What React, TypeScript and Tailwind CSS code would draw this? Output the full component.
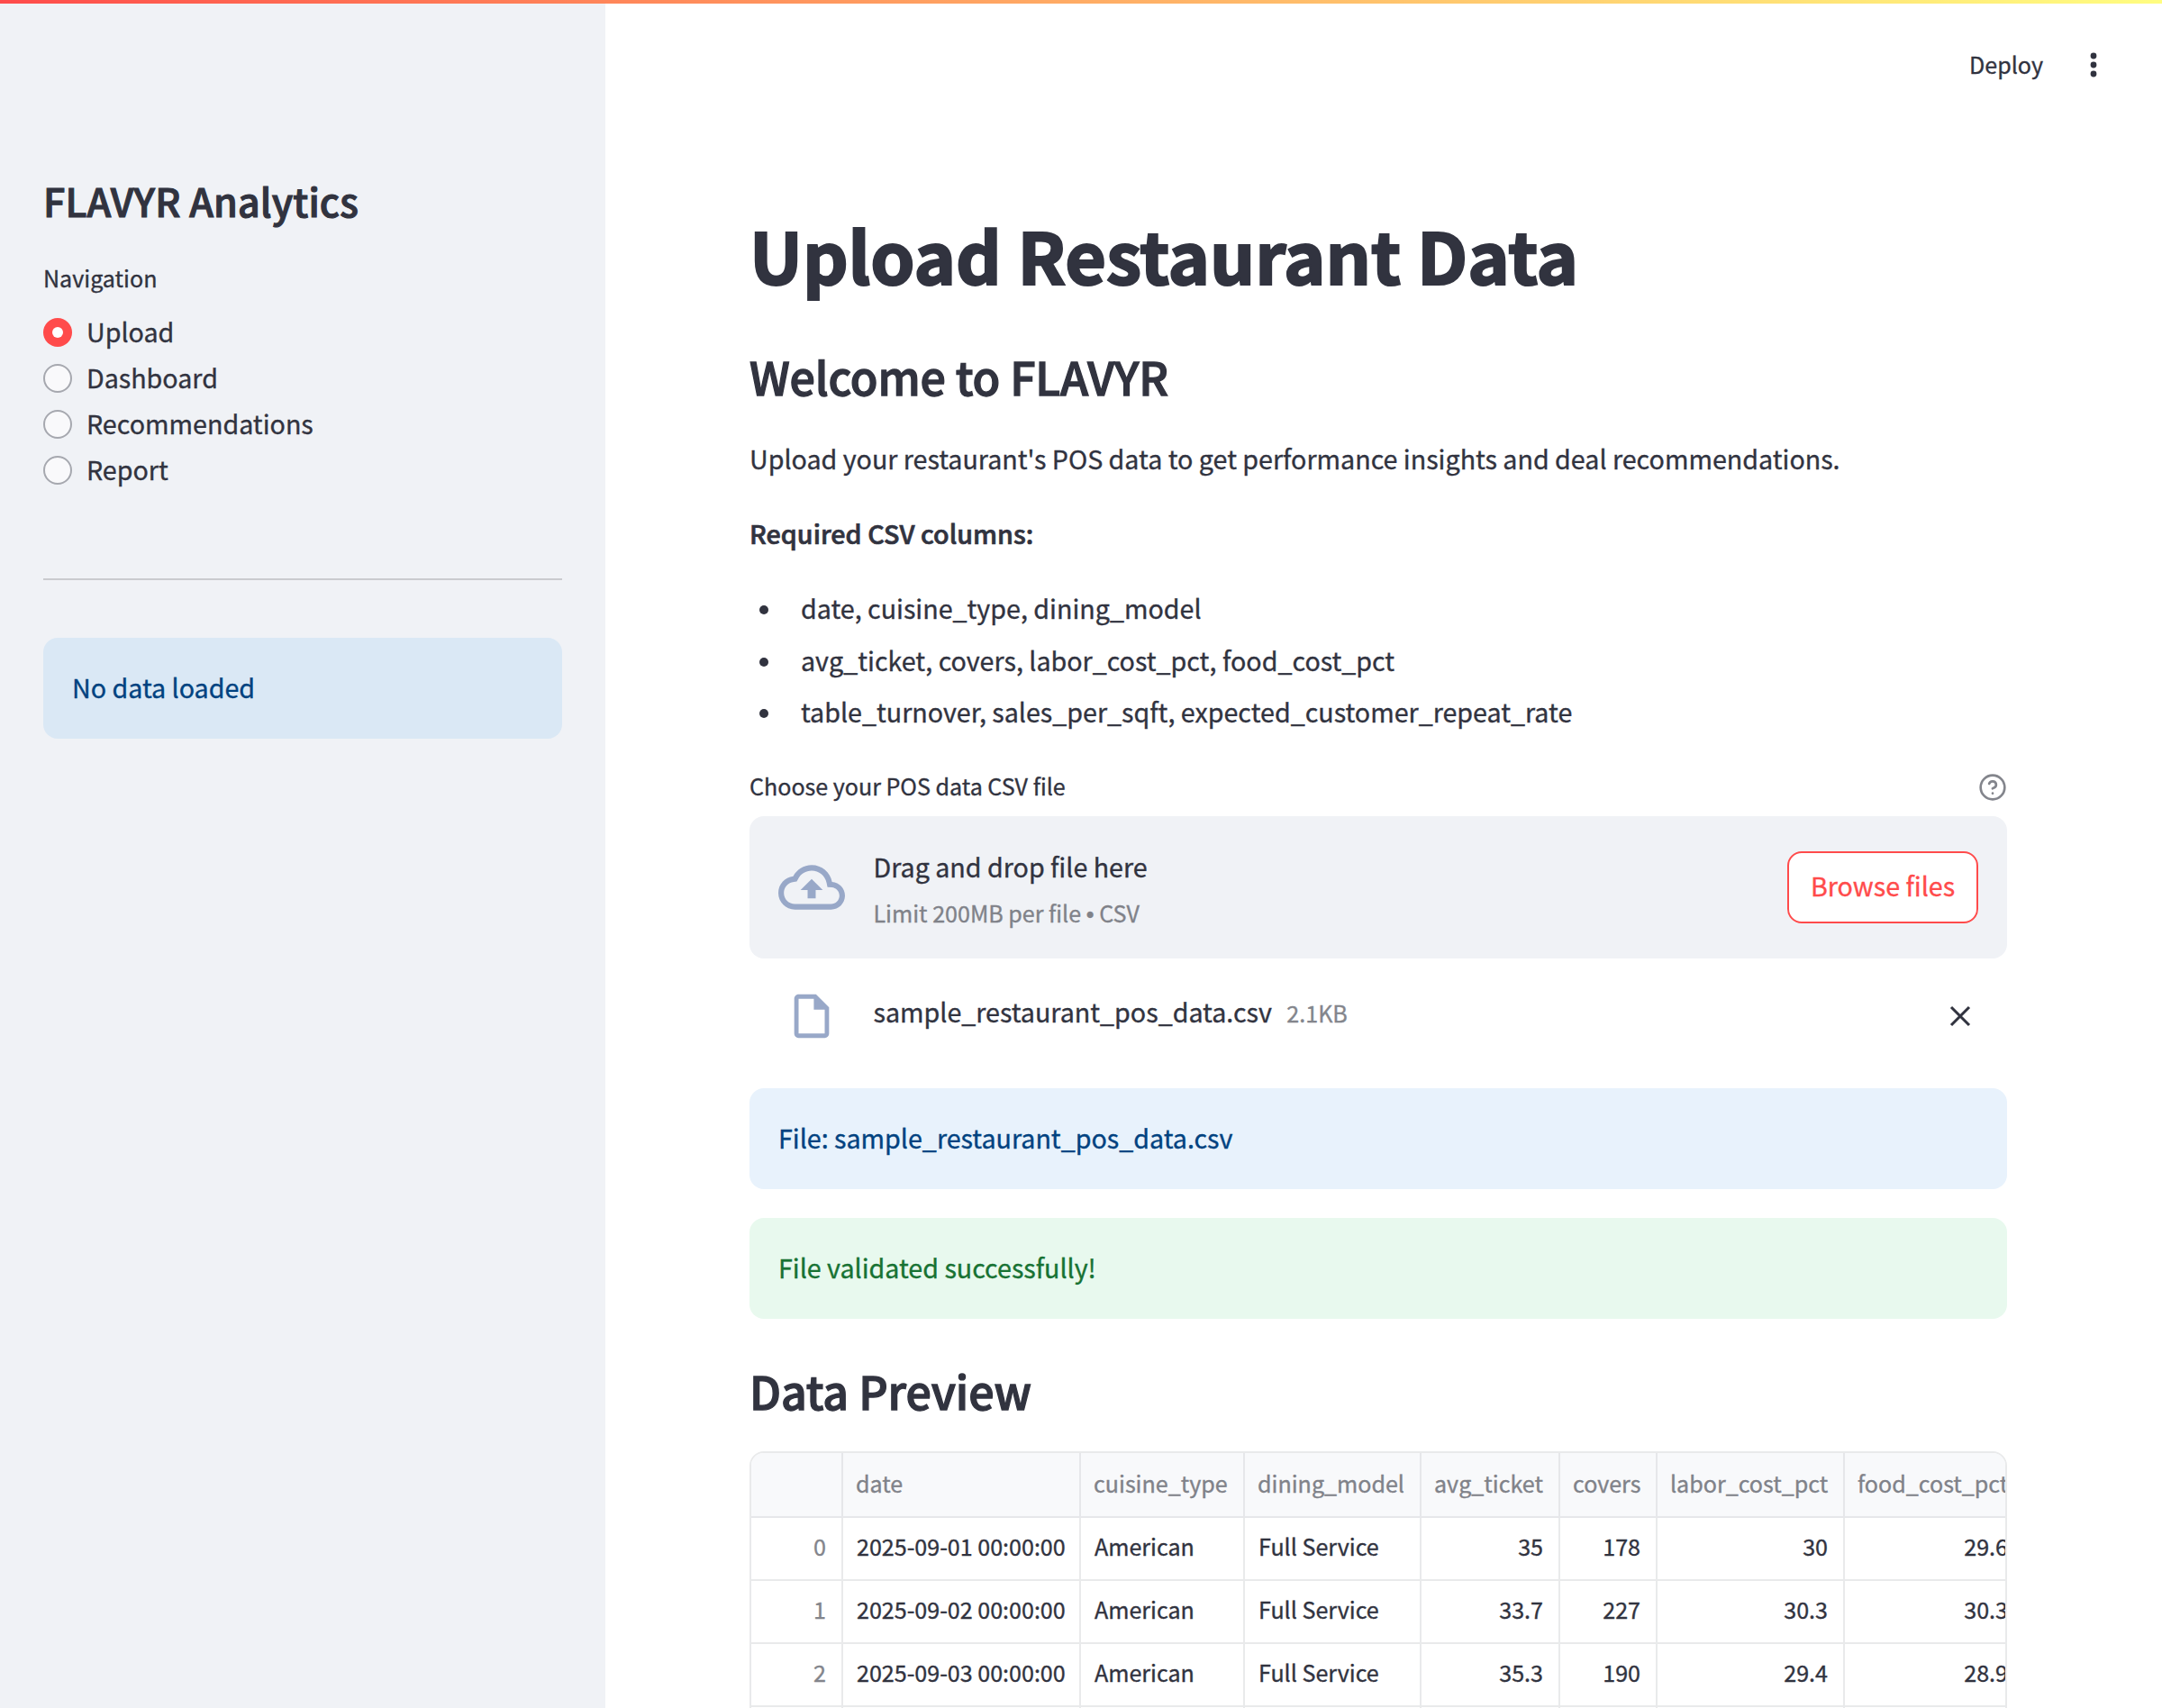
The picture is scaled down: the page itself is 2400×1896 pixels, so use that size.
import { CircleHelp } from "lucide-react";

const navItems = [
  { label: "Upload", selected: true },
  { label: "Dashboard", selected: false },
  { label: "Recommendations", selected: false },
  { label: "Report", selected: false },
];

const requiredColumns = [
  "date, cuisine_type, dining_model",
  "avg_ticket, covers, labor_cost_pct, food_cost_pct",
  "table_turnover, sales_per_sqft, expected_customer_repeat_rate",
];

const headers = [
  "",
  "date",
  "cuisine_type",
  "dining_model",
  "avg_ticket",
  "covers",
  "labor_cost_pct",
  "food_cost_pct",
];

const rows = [
  ["0", "2025-09-01 00:00:00", "American", "Full Service", "35", "178", "30", "29.6"],
  ["1", "2025-09-02 00:00:00", "American", "Full Service", "33.7", "227", "30.3", "30.3"],
  ["2", "2025-09-03 00:00:00", "American", "Full Service", "35.3", "190", "29.4", "28.9"],
  ["", "", "", "", "", "", "", ""],
];

const gridCols = "grid grid-cols-[102px_264px_182px_196px_154px_108px_208px_200px] w-[1414px]";

function Radio({ label, selected }: { label: string; selected: boolean }) {
  return (
    <label className="flex h-12 items-center gap-4">
      {selected ? (
        <span className="flex size-8 items-center justify-center rounded-full bg-[#ff4b4b]">
          <span className="size-3 rounded-full bg-white" />
        </span>
      ) : (
        <span className="size-8 rounded-full border-2 border-[#a6a8af] bg-[#f9f9fb]" />
      )}
      <span className="-mt-[3px] text-[28.65px] leading-12">{label}</span>
    </label>
  );
}

function Sidebar() {
  return (
    <aside className="w-[672px] shrink-0 bg-[#f0f2f6] px-12 pt-[193px]">
      <h2 className="text-[43px] leading-[58px] font-medium tracking-[0.1px] [-webkit-text-stroke:1.1px]">
        FLAVYR Analytics
      </h2>
      <p className="mt-[37px] text-[25.07px] leading-10">Navigation</p>
      <div className="mt-[17px] flex flex-col gap-[3px]">
        {navItems.map((item) => (
          <Radio key={item.label} {...item} />
        ))}
      </div>
      <hr className="mt-[96px] border-t-2 border-[#cacbcf]" />
      <div className="mt-16 flex h-28 items-center rounded-2xl bg-[#dae8f5] px-8 pb-[2px] text-[28.65px] text-[#004280]">
        No data loaded
      </div>
    </aside>
  );
}

function Header() {
  return (
    <header className="flex h-[144px] items-center justify-end pr-[66px]">
      <span className="-mt-[2px] text-[25.07px] leading-10">Deploy</span>
      <svg className="ml-[46px]" width="20" height="32" viewBox="0 0 20 32" fill="#31333f">
        <circle cx="10" cy="6" r="3.4" />
        <circle cx="10" cy="16" r="3.4" />
        <circle cx="10" cy="26" r="3.4" />
      </svg>
    </header>
  );
}

function Uploader() {
  return (
    <>
      <div className="mt-[36px] flex h-10 items-center justify-between">
        <span className="text-[25.07px] leading-10">Choose your POS data CSV file</span>
        <CircleHelp className="mt-[4px] size-8 text-[#83858c]" />
      </div>
      <div className="mt-[14px] flex h-[158px] items-center rounded-2xl bg-[#f0f2f6] px-8">
        <svg width="74" height="74" viewBox="0 0 24 24" fill="#98a8c8">
          <path d="M19.35 10.04C18.67 6.59 15.64 4 12 4 9.11 4 6.6 5.64 5.35 8.04 2.34 8.36 0 10.91 0 14c0 3.31 2.69 6 6 6h13c2.76 0 5-2.24 5-5 0-2.64-2.05-4.78-4.65-4.96zM19 18H6c-2.21 0-4-1.79-4-4 0-2.05 1.53-3.76 3.56-3.97l1.07-.11.5-.95C8.08 7.14 9.94 6 12 6c2.62 0 4.88 1.86 5.39 4.43l.3 1.5 1.53.11c1.56.1 2.78 1.41 2.78 2.96 0 1.65-1.35 3-3 3zM8 13h2.55v3h2.9v-3H16l-4-4z" />
        </svg>
        <div className="mt-[7px] ml-[31.5px] flex flex-col">
          <span className="text-[28.65px] leading-[52px]">Drag and drop file here</span>
          <span className="text-[25.07px] leading-[51px] text-[#808289]">
            Limit 200MB per file <span className="font-['Liberation_Sans'] text-[25px]">•</span> CSV
          </span>
        </div>
        <button className="ml-auto h-20 w-[212px] rounded-2xl border-2 border-[#ff4b4b] bg-white pb-[4px] text-[28.65px] text-[#ff4b4b]">
          Browse files
        </button>
      </div>
      <div className="flex h-[144px] items-center pb-[17px] pl-10 pr-[40px]">
        <svg width="58" height="58" viewBox="0 0 24 24" fill="#98a8c8">
          <path d="M14 2H6c-1.1 0-1.99.9-1.99 2L4 20c0 1.1.89 2 1.99 2H18c1.1 0 2-.9 2-2V8l-6-6zM6 20V4h7v5h5v11H6z" />
        </svg>
        <div className="-mt-[10px] ml-[39.5px] flex items-baseline gap-[16.5px]">
          <span className="text-[28.65px] leading-[52px]">sample_restaurant_pos_data.csv</span>
          <span className="text-[25.07px] text-[#83858c]">2.1KB</span>
        </div>
        <svg
          className="ml-auto"
          width="24"
          height="24"
          viewBox="-12 -12 24 24"
          stroke="#31333f"
          strokeWidth="3.1"
        >
          <path d="M-10 -10L10 10M10 -10L-10 10" />
        </svg>
      </div>
    </>
  );
}

function PreviewTable() {
  return (
    <div className="mt-[34px] h-[400px] shrink-0 overflow-hidden rounded-2xl border-2 border-[#e9eaeb] text-[25.07px]">
      <div className={`${gridCols} h-[72px] bg-[#f8f9fb] text-[#808289]`}>
        {headers.map((h, i) => (
          <div
            key={i}
            className="flex items-center border-r-2 border-b-2 border-[#e6e7ea] pb-[3px] pl-[14px] whitespace-nowrap"
          >
            {h}
          </div>
        ))}
      </div>
      {rows.map((row, r) => (
        <div key={r} className={`${gridCols} h-[70px]`}>
          {row.map((cell, i) => (
            <div
              key={i}
              className={
                "flex items-center border-r-2 border-b-2 border-[#e9eaeb] pb-[5px] pl-[15px] whitespace-nowrap " +
                (i === 0 ? "justify-end pr-[17px] text-[#83858c]" : i >= 4 ? "justify-end pr-[17px]" : "")
              }
            >
              {cell}
            </div>
          ))}
        </div>
      ))}
    </div>
  );
}

export default function App() {
  return (
    <div className="h-[1896px] w-[2400px] overflow-hidden bg-white font-['Noto_Sans_CJK_SC',sans-serif] text-[#31333f] [-webkit-text-stroke:0.35px]">
      <div className="relative flex h-full">
        <div className="absolute inset-x-0 top-0 h-1 bg-linear-to-r from-[#ff4b4b] to-[#fffd80]" />
        <Sidebar />
        <div className="flex-1">
          <Header />
          <main className="ml-[160px] flex w-[1396px] flex-col">
            <h1 className="mt-[85px] text-[78.8px] leading-[106px] font-bold tracking-[-0.05px] [-webkit-text-stroke:2.2px]">
              Upload Restaurant Data
            </h1>
            <h2 className="mt-12 text-[50.1px] leading-[68px] font-medium tracking-[-0.2px] [-webkit-text-stroke:1.3px]">
              Welcome to FLAVYR
            </h2>
            <p className="mt-[32px] text-[28.65px] leading-[52px]">
              Upload your restaurant's POS data to get performance insights and deal recommendations.
            </p>
            <p className="mt-[31px] text-[28.65px] leading-[52px] font-medium tracking-[0.04px] [-webkit-text-stroke:0.7px]">
              Required CSV columns:
            </p>
            <ul className="mt-[31px] flex h-[167px] flex-col gap-[5.5px]">
              {requiredColumns.map((c) => (
                <li key={c} className="flex h-[52px] items-center text-[28.65px] leading-[52px]">
                  <span className="mt-[4px] mr-[36px] ml-[11px] size-[10px] rounded-full bg-[#31333f]" />
                  {c}
                </li>
              ))}
            </ul>
            <Uploader />
            <div className="flex h-28 items-center rounded-2xl bg-[#e8f2fc] px-8 pb-[1px] text-[28.65px] text-[#004280]">
              File: sample_restaurant_pos_data.csv
            </div>
            <div className="mt-8 flex h-28 items-center rounded-2xl bg-[#e8f9ee] px-8 pb-[1px] text-[28.65px] text-[#177233]">
              File validated successfully!
            </div>
            <h2 className="mt-[45px] text-[50.1px] leading-[68px] font-medium tracking-[-0.1px] [-webkit-text-stroke:1.3px]">
              Data Preview
            </h2>
            <PreviewTable />
          </main>
        </div>
      </div>
    </div>
  );
}
